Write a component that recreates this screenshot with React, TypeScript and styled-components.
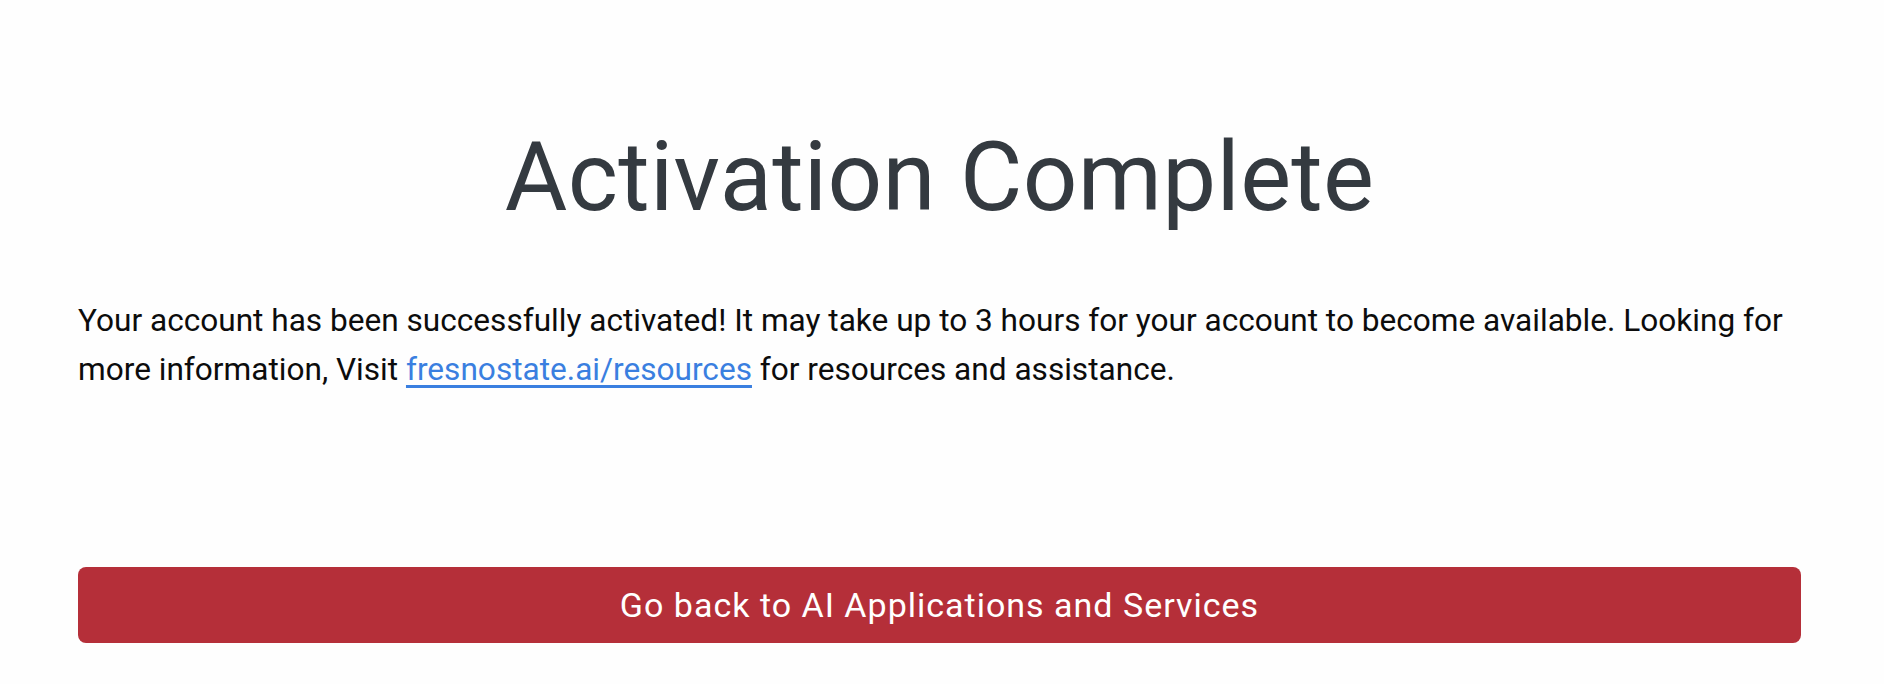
import styled, { createGlobalStyle } from "styled-components";

const GlobalStyle = createGlobalStyle`
  html, body {
    margin: 0;
    padding: 0;
    background: #fefefe;
  }
  body {
    font-family: Roboto, "Liberation Sans", Arial, sans-serif;
  }
`;

export default function App() {
  return (
    <>
      <GlobalStyle />
      <Page>
        <Container>
          <Title>Activation Complete</Title>
          <Message>
            Your account has been successfully activated! It may take up to 3
            hours for your account to become available. Looking for more
            information, Visit{" "}
            <ResourceLink href="#">fresnostate.ai/resources</ResourceLink> for
            resources and assistance.
          </Message>
          <BackButton type="button">Go back to AI Applications and Services</BackButton>
        </Container>
      </Page>
    </>
  );
}

const Page = styled.main`
  width: 100%;
  height: 684px;
  display: flex;
  padding: 0 83px 0 78px;
  box-sizing: border-box;
`;

const Container = styled.div`
  flex: 1;
  display: flex;
  flex-direction: column;
  padding-top: 120px;
`;

const Title = styled.h1`
  margin: 0;
  text-align: center;
  color: #343a40;
  font-size: 96px;
  font-weight: 400;
  line-height: 1.2;
  letter-spacing: 0.3px;
`;

const Message = styled.p`
  margin: 61px 0 0;
  color: #0c0c0c;
  font-size: 31.6px;
  line-height: 49px;
`;

const ResourceLink = styled.a`
  color: #3a7fe0;
  text-decoration: underline;
  text-underline-offset: 5px;
`;

const BackButton = styled.button`
  margin-top: 173px;
  height: 76px;
  width: 100%;
  border: 0;
  border-radius: 8px;
  background-color: #b52f39;
  color: #fff;
  font-family: Roboto, "Liberation Sans", Arial, sans-serif;
  font-size: 34px;
  letter-spacing: 1px;
  cursor: pointer;
`;
